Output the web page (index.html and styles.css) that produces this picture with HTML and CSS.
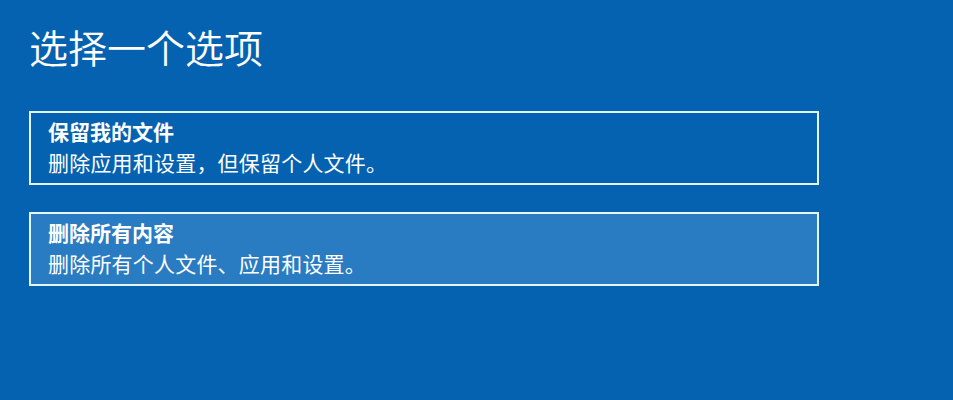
FILE: index.html
```html
<!DOCTYPE html>
<html lang="zh-CN">
<head>
<meta charset="utf-8">
<link rel="stylesheet" href="styles.css">
</head>
<body>
<div class="page">
  <h1 class="heading">选择一个选项</h1>
  <div class="options">
    <div class="option">
      <div class="option-title">保留我的文件</div>
      <div class="option-desc">删除应用和设置，但保留个人文件。</div>
    </div>
    <div class="option option-hover">
      <div class="option-title">删除所有内容</div>
      <div class="option-desc">删除所有个人文件、应用和设置。</div>
    </div>
  </div>
</div>
</body>
</html>
```
FILE: styles.css
```css
html, body {
  margin: 0;
  padding: 0;
  height: 100%;
}
body {
  background: #0562b0;
  color: #ffffff;
  font-family: "Noto Sans CJK SC", "Noto Sans", sans-serif;
}
.page {
  padding: 18px 0 0 29px;
}
.heading {
  margin: 0;
  font-size: 39px;
  font-weight: 350;
  line-height: 56px;
  height: 56px;
  letter-spacing: 0;
}
.options {
  margin-top: 37px;
  display: flex;
  flex-direction: column;
  gap: 27px;
  width: 790px;
}
.option {
  box-sizing: border-box;
  height: 74px;
  border: 2px solid #e6f4ff;
  padding: 3px 0 5px 17px;
}
.option-hover {
  background: #2a7cc2;
}
.option-title {
  font-size: 21px;
  font-weight: 700;
  line-height: 31px;
}
.option-desc {
  font-size: 21px;
  font-weight: 400;
  line-height: 31px;
  letter-spacing: 0.2px;
}
```
